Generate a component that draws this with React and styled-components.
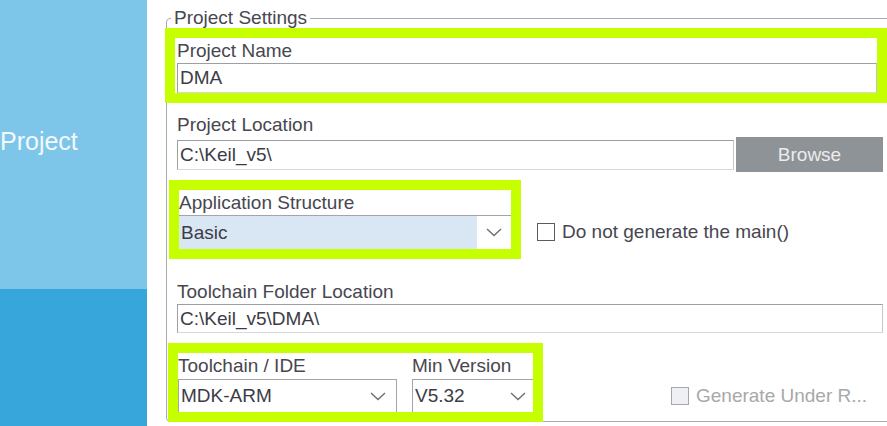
import React from 'react';
import styled, { createGlobalStyle } from 'styled-components';

const GlobalStyle = createGlobalStyle`
  html, body {
    margin: 0;
    padding: 0;
    background: #ffffff;
    overflow: hidden;
  }
  body {
    font-family: "Liberation Sans", Arial, sans-serif;
  }
`;

const GREEN = '#c6ff00';
const TEXT = '#474750';

const Page = styled.div`
  display: flex;
  width: 887px;
  height: 426px;
  overflow: hidden;
`;

const Sidebar = styled.div`
  width: 147px;
  flex-shrink: 0;
  display: flex;
  flex-direction: column;
`;

const SideItem = styled.div`
  height: ${p => p.$h};
  flex: ${p => (p.$grow ? 1 : 'none')};
  background: ${p => p.$bg};
  color: #f2f9fd;
  font-size: 25px;
  line-height: 28px;
  padding-top: ${p => p.$pt || 0}px;
  box-sizing: border-box;
`;

const Main = styled.div`
  flex: 1;
  padding: 8px 0 0 19px;
  overflow: hidden;
  min-width: 0;
`;

const Group = styled.fieldset`
  margin: 0;
  padding: 0 10px 0 10px;
  width: 706px;
  min-width: 0;
  border: 1px solid #a9acaf;
  border-radius: 4px;
  color: ${TEXT};
  font-size: 19px;
`;

const Legend = styled.legend`
  margin-left: -6px;
  padding: 0 3px;
  line-height: 20px;
  font-size: 19px;
  color: ${TEXT};
`;

const Highlight = styled.div`
  border: 10px solid ${GREEN};
  margin-left: ${p => p.$ml}px;
  margin-right: ${p => p.$mr || 0}px;
  margin-top: ${p => p.$mt || 0}px;
  margin-bottom: ${p => p.$mb || 0}px;
  padding-left: ${p => p.$pl || 0}px;
  width: ${p => (p.$w ? `${p.$w}px` : 'auto')};
  flex-shrink: 0;
  background: #ffffff;
`;

const Label = styled.div`
  line-height: ${p => p.$lh || 25}px;
  margin-top: ${p => p.$mt || 0}px;
  white-space: nowrap;
`;

const TextBox = styled.div`
  height: ${p => p.$h || 30}px;
  box-sizing: border-box;
  border: 1px solid;
  border-color: #9c9fa3 #c4c6c8 #d6d8da #9c9fa3;
  padding-left: 2px;
  font-size: 19px;
  line-height: ${p => (p.$h || 30) - 2}px;
  color: #3c3c46;
  flex: ${p => (p.$grow ? 1 : 'none')};
  background: #ffffff;
`;

const Row = styled.div`
  display: flex;
  align-items: ${p => p.$align || 'center'};
  gap: ${p => p.$gap || 0}px;
  margin-top: ${p => p.$mt || 0}px;
`;

const BrowseButton = styled.div`
  width: 147px;
  height: 35px;
  background: #8e9398;
  color: #ececec;
  font-size: 19px;
  line-height: 35px;
  text-align: center;
`;

const SelectBox = styled.div`
  display: flex;
  align-items: center;
  height: ${p => p.$h}px;
  box-sizing: border-box;
  border-top: 1px solid #a3a5a8;
  border-left: ${p => (p.$framed ? '1px solid #a3a5a8' : 'none')};
  border-right: ${p => (p.$framedRight ? '1px solid #a3a5a8' : 'none')};
  background: #ffffff;
  color: #3c3c46;
  font-size: 19px;
`;

const SelectValue = styled.div`
  flex: 1;
  align-self: stretch;
  display: flex;
  align-items: center;
  padding-left: 2px;
  background: ${p => p.$bg || 'transparent'};
`;

const Arrow = styled.div`
  width: ${p => p.$w}px;
  display: flex;
  justify-content: center;
  align-items: center;
`;

const Columns = styled.div`
  display: flex;
  gap: 15px;
`;

const Column = styled.div`
  width: ${p => (p.$w ? `${p.$w}px` : 'auto')};
  flex: ${p => (p.$w ? 'none' : 1)};
`;

const Check = styled.label`
  display: flex;
  align-items: center;
  gap: 7px;
  line-height: 22px;
  white-space: nowrap;
  margin-left: ${p => p.$ml}px;
  margin-bottom: ${p => p.$mb}px;
  color: ${p => (p.$disabled ? '#a8a8a8' : TEXT)};
`;

const CheckBox = styled.span`
  width: 18px;
  height: 18px;
  box-sizing: border-box;
  border: 1px solid ${p => (p.$disabled ? '#a3a6aa' : '#5a5a5a')};
  background: ${p => (p.$disabled ? '#eef0f3' : '#ffffff')};
  flex-shrink: 0;
`;

const Chevron = () => (
  <svg width="16" height="9" viewBox="0 0 16 9">
    <polyline points="1,1 8,7.5 15,1" fill="none" stroke="#6e6e6e" strokeWidth="1.4" />
  </svg>
);

export default function App() {
  return (
    <>
      <GlobalStyle />
      <Page>
        <Sidebar>
          <SideItem $h="289px" $bg="#7dc5e9" $pt={127}>Project</SideItem>
          <SideItem $grow $bg="#37a6da" />
        </Sidebar>
        <Main>
          <Group>
            <Legend>Project Settings</Legend>

            <Highlight $ml={-12} $mr={-4} $pl={2}>
              <Label>Project Name</Label>
              <TextBox>DMA</TextBox>
            </Highlight>

            <Label $mt={9}>Project Location</Label>
            <Row $gap={2}>
              <TextBox $grow>C:\Keil_v5\</TextBox>
              <BrowseButton>Browse</BrowseButton>
            </Row>

            <Row $align="flex-end" $mt={8}>
              <Highlight $ml={-8} $w={332}>
                <Label>Application Structure</Label>
                <SelectBox $h={34}>
                  <SelectValue $bg="#d9e7f4">Basic</SelectValue>
                  <Arrow $w={34}><Chevron /></Arrow>
                </SelectBox>
              </Highlight>
              <Check $ml={16} $mb={16}>
                <CheckBox />
                Do not generate the main()
              </Check>
            </Row>

            <Label $mt={20}>Toolchain Folder Location</Label>
            <TextBox $h={29}>C:\Keil_v5\DMA\</TextBox>

            <Row $align="flex-end" $mt={10}>
              <Highlight $ml={-9} $w={355} $mb={-1}>
                <Columns>
                  <Column $w={219}>
                    <Label $lh={26}>Toolchain / IDE</Label>
                    <SelectBox $h={33} $framed $framedRight>
                      <SelectValue>MDK-ARM</SelectValue>
                      <Arrow $w={36}><Chevron /></Arrow>
                    </SelectBox>
                  </Column>
                  <Column>
                    <Label $lh={26}>Min Version</Label>
                    <SelectBox $h={33} $framed>
                      <SelectValue>V5.32</SelectValue>
                      <Arrow $w={30}><Chevron /></Arrow>
                    </SelectBox>
                  </Column>
                </Columns>
              </Highlight>
              <Check $ml={128} $mb={14} $disabled>
                <CheckBox $disabled />
                Generate Under R...
              </Check>
            </Row>
          </Group>
        </Main>
      </Page>
    </>
  );
}
